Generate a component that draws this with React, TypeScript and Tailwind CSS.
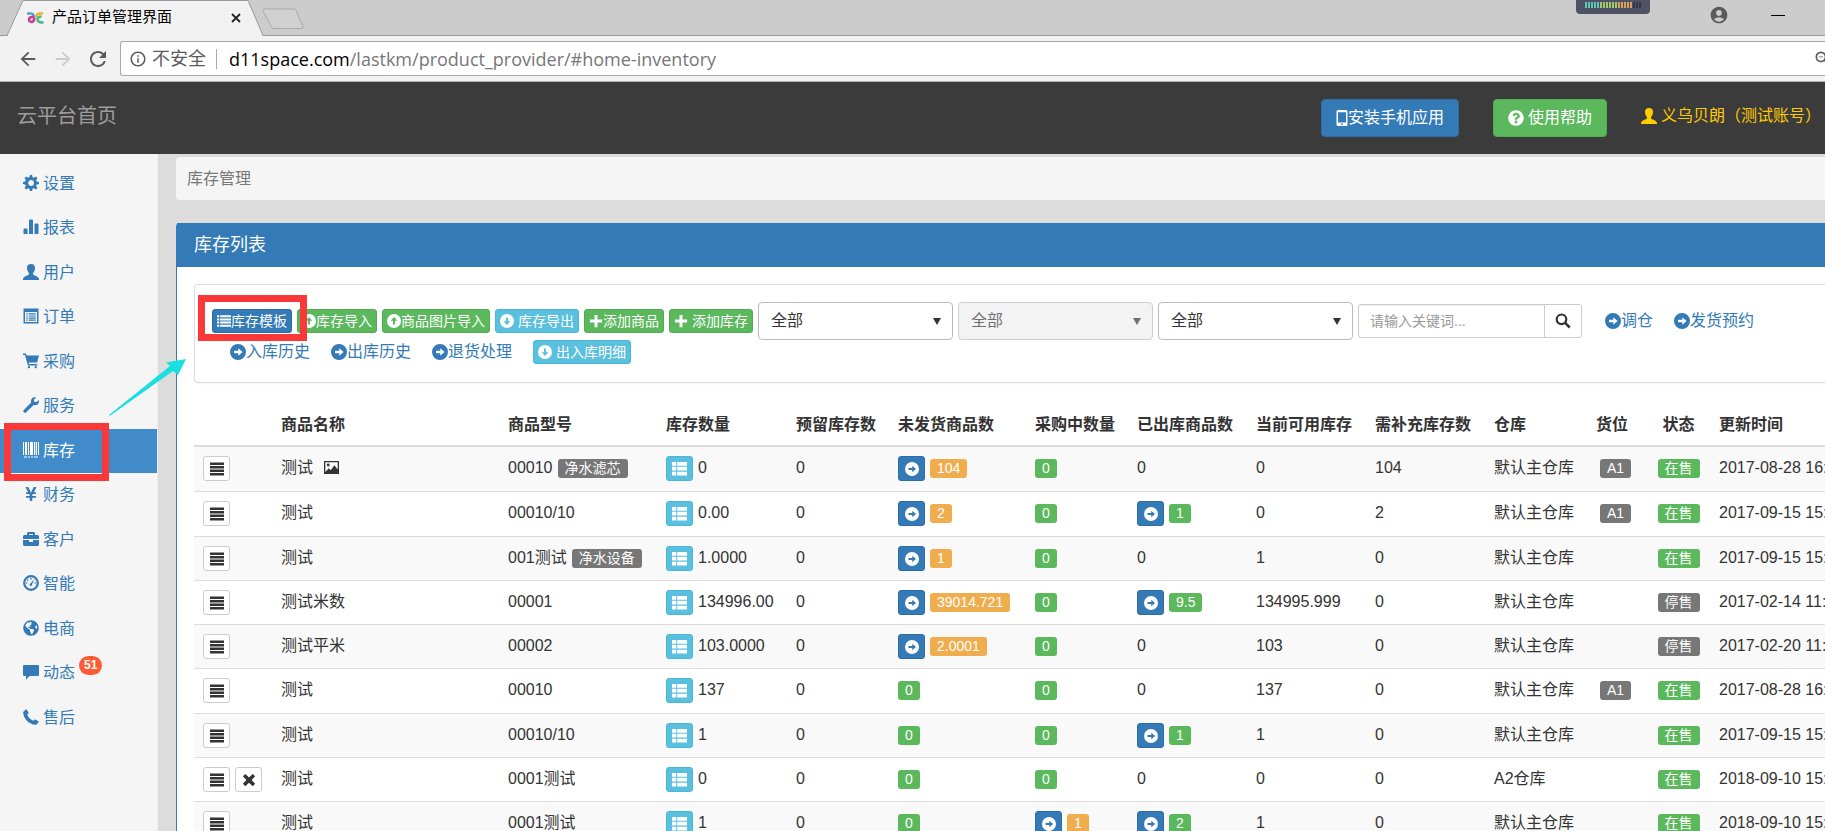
import { useState } from 'react'
import type { ReactNode } from 'react'
import clsx from 'clsx'
import { FaBriefcase, FaGlobeAmericas, FaQuestionCircle, FaYenSign } from 'react-icons/fa'
import {
  MdAccountCircle,
  MdArrowBack,
  MdArrowForward,
  MdInfoOutline,
  MdRefresh,
  MdZoomOut
} from 'react-icons/md'

interface IconProps {
  className?: string
}

function Svg({ className = 'size-4', children }: { className?: string; children: ReactNode }) {
  return (
    <svg viewBox="0 0 16 16" fill="currentColor" aria-hidden="true" className={clsx('shrink-0', className)}>
      {children}
    </svg>
  )
}

function CogIcon({ className }: IconProps) {
  return (
    <Svg className={className}>
      <circle cx="8" cy="8" r="4.4" fill="none" stroke="currentColor" strokeWidth="3" />
      {[0, 45, 90, 135, 180, 225, 270, 315].map((deg) => (
        <path key={deg} d="M6.3 3 6.900 0h2.200l.6 3z" transform={`rotate(${deg} 8 8)`} />
      ))}
    </Svg>
  )
}

function StatsIcon({ className }: IconProps) {
  return (
    <Svg className={className}>
      <path d="M.5 10.5q0-1 1-1h2q1 0 1 1V15h-4zM6 1.5q0-1 1-1h2q1 0 1 1V15H6zM11.5 5.500q0-1 1-1h2q1 0 1 1V15h-4z" />
    </Svg>
  )
}

function UserIcon({ className }: IconProps) {
  return (
    <Svg className={className}>
      <path d="M8 0c2.600 0 4 1.600 4 4 0 2-.8 3.900-1.900 4.900v1.500c.3.9 5.400 1.700 5.900 4.300v1.300H0v-1.300c.5-2.600 5.600-3.400 5.900-4.300V8.900C4.800 7.900 4 6 4 4c0-2.400 1.400-4 4-4z" />
    </Svg>
  )
}

function ListAltIcon({ className }: IconProps) {
  return (
    <Svg className={className}>
      <path fillRule="evenodd" d="M.5.5h15v15H.5zM2 4v10h12V4z" />
      <path d="M3.200 5.300h1.500v1.200H3.200zM5.700 5.300h7v1.200h-7zM3.200 7.400h1.500v1.200H3.200zM5.700 7.400h7v1.200h-7zM3.200 9.500h1.500v1.200H3.200zM5.700 9.500h7v1.200h-7zM3.200 11.600h1.500v1.200H3.200zM5.700 11.600h7v1.200h-7z" />
    </Svg>
  )
}

function CartIcon({ className }: IconProps) {
  return (
    <Svg className={className}>
      <path d="M0 .6h2.900l.7 1.900H16l-1.900 7H5.700l.4 1.600h8.200v1.400H4.900L2 2H0z" />
      <rect x="4.800" y="13" width="2.200" height="2.200" rx=".8" />
      <rect x="11.600" y="13" width="2.200" height="2.200" rx=".8" />
    </Svg>
  )
}

function WrenchIcon({ className }: IconProps) {
  return (
    <Svg className={className}>
      <path d="M13.200.5 10.900 2.800l.4 2 2 .4 2.300-2.300c.9 2.200-.3 4.600-2.500 5.200-.9.200-1.700.1-2.500-.2L3.200 15.300c-.7.700-1.700.7-2.400 0s-.7-1.700 0-2.400L8.200 5.500C7.400 3.200 8.700.9 10.900.3c.8-.2 1.600-.1 2.300.2z" />
    </Svg>
  )
}

function BarcodeIcon({ className }: IconProps) {
  return (
    <Svg className={className}>
      <path d="M0 0h1v13H0zM2 0h2v13H2zM5 0h1v13H5zM7 0h3v13H7zM11 0h1v13h-1zM12.700 0h1.300v13h-1.300zM15 0h1v13h-1zM1 14.400h3v1H1zM5 14.400h2v1H5zM8 14.400h2v1H8zM11 14.400h4v1h-4z" />
    </Svg>
  )
}

function DashboardIcon({ className }: IconProps) {
  return (
    <Svg className={className}>
      <circle cx="8" cy="8" r="6.800" fill="none" stroke="currentColor" strokeWidth="2.200" />
      <circle cx="8" cy="3.900" r=".8" />
      <circle cx="4.800" cy="5.200" r=".8" />
      <circle cx="3.800" cy="8" r=".8" />
      <circle cx="12.200" cy="8" r=".8" />
      <path d="M11.500 4.200 9.100 9.200a1.300 1.300 0 1 1-1.800-.8z" />
    </Svg>
  )
}

function CommentIcon({ className }: IconProps) {
  return (
    <Svg className={className}>
      <path d="M1.200 1h13.600q1.200 0 1.200 1.200v8.600q0 1.200-1.200 1.200H6.500L3 15.500V12H1.200Q0 12 0 10.800V2.200Q0 1 1.200 1z" />
    </Svg>
  )
}

function EarphoneIcon({ className }: IconProps) {
  return (
    <Svg className={className}>
      <path d="M.6 2.400 2.800.5q.6-.4 1 .2l1.700 2.800q.3.600-.2 1L4.200 5.500c.8 2.700 3.600 5.500 6.300 6.300l1-1.100q.4-.5 1-.2l2.800 1.700q.6.400.2 1l-1.900 2.200q-.4.500-1.300.4C6.200 15.300.7 9.800.2 3.700Q.1 2.800.6 2.400z" />
    </Svg>
  )
}

// Solid disc with a cut-out arrow; the rotation turns it into up or down.
function CircleArrowIcon({ className, deg = 0 }: IconProps & { deg?: number }) {
  return (
    <Svg className={className}>
      <path
        fillRule="evenodd"
        transform={`rotate(${deg} 8 8)`}
        d="M8 0a8 8 0 1 1 0 16A8 8 0 0 1 8 0zM8.300 4.200v2.600H4v2.400h4.300v2.600L12.600 8z"
      />
    </Svg>
  )
}

function ListIcon({ className }: IconProps) {
  return (
    <Svg className={className}>
      <path d="M0 1.500h2.600v2.200H0zM3.600 1.500H16v2.200H3.600zM0 5.100h2.600v2.200H0zM3.600 5.100H16v2.200H3.600zM0 8.700h2.600v2.200H0zM3.600 8.700H16v2.200H3.600zM0 12.300h2.600v2.200H0zM3.600 12.300H16v2.200H3.600z" />
    </Svg>
  )
}

function ThListIcon({ className }: IconProps) {
  return (
    <Svg className={className}>
      <path d="M0 1h4.500v4H0zM5.500 1H16v4H5.500zM0 6.200h4.500v4H0zM5.500 6.200H16v4H5.500zM0 11.400h4.500v4H0zM5.500 11.400H16v4H5.500z" />
    </Svg>
  )
}

function JustifyIcon({ className }: IconProps) {
  return (
    <Svg className={className}>
      <path d="M0 .5h16v2.900H0zM0 4.500h16v2.900H0zM0 8.500h16v2.900H0zM0 12.500h16v2.900H0z" />
    </Svg>
  )
}

function RemoveIcon({ className }: IconProps) {
  return (
    <Svg className={className}>
      <path d="m3.800 1 4.200 4 4.200-4L15 3.800 11 8l4 4.200-2.800 2.800L8 11l-4.200 4L1 12.200 5 8 1 3.800z" />
    </Svg>
  )
}

function PlusIcon({ className }: IconProps) {
  return (
    <Svg className={className}>
      <path d="M6.300 1h3.400v5.300H15v3.400H9.700V15H6.300V9.700H1V6.300h5.300z" />
    </Svg>
  )
}

function PictureIcon({ className }: IconProps) {
  return (
    <Svg className={className}>
      <path fillRule="evenodd" d="M0 1h16v14H0zM1.400 2.400v10.400l3.800-4 2 2L11 5.500l3.600 4.500V2.400z" />
      <circle cx="4.500" cy="5.300" r="1.500" />
    </Svg>
  )
}

function SearchIcon({ className }: IconProps) {
  return (
    <Svg className={className}>
      <circle cx="6.500" cy="6.300" r="4.800" fill="none" stroke="currentColor" strokeWidth="2.200" />
      <path d="m9.300 10.700 1.700-1.700 4.600 4.500-1.800 1.900z" />
    </Svg>
  )
}

function MobileIcon() {
  return (
    <svg viewBox="2 0 12 16" fill="currentColor" aria-hidden="true" className="h-4 w-3 shrink-0">
      <path fillRule="evenodd" d="M4 0h8q1.500 0 1.500 1.500v13q0 1.500-1.500 1.500H4q-1.500 0-1.500-1.500v-13Q2.500 0 4 0zM4 2.200v10.300h8V2.200zM7.200 13.500v1.500h1.600v-1.500z" />
    </svg>
  )
}

const navItems = [
  { label: '设置', icon: <CogIcon /> },
  { label: '报表', icon: <StatsIcon /> },
  { label: '用户', icon: <UserIcon /> },
  { label: '订单', icon: <ListAltIcon /> },
  { label: '采购', icon: <CartIcon /> },
  { label: '服务', icon: <WrenchIcon /> },
  { label: '库存', icon: <BarcodeIcon />, active: true },
  { label: '财务', icon: <FaYenSign className="size-4" /> },
  { label: '客户', icon: <FaBriefcase className="size-4" /> },
  { label: '智能', icon: <DashboardIcon /> },
  { label: '电商', icon: <FaGlobeAmericas className="size-4" /> },
  { label: '动态', icon: <CommentIcon />, badge: 51 },
  { label: '售后', icon: <EarphoneIcon /> }
]

interface Row {
  name: string
  picture?: boolean
  removable?: boolean
  model: string
  tag?: string
  stock: string
  unshipped: string
  buying?: string
  shipped?: string
  available: string
  needed: string
  warehouse?: string
  slot?: string
  stopped?: boolean
  updated: string
}

const rows: Row[] = [
  { name: '测试', picture: true, model: '00010', tag: '净水滤芯', stock: '0', unshipped: '104', available: '0', needed: '104', slot: 'A1', updated: '2017-08-28 16:' },
  { name: '测试', model: '00010/10', stock: '0.00', unshipped: '2', shipped: '1', available: '0', needed: '2', slot: 'A1', updated: '2017-09-15 15:' },
  { name: '测试', model: '001测试', tag: '净水设备', stock: '1.0000', unshipped: '1', available: '1', needed: '0', updated: '2017-09-15 15:' },
  { name: '测试米数', model: '00001', stock: '134996.00', unshipped: '39014.721', shipped: '9.5', available: '134995.999', needed: '0', stopped: true, updated: '2017-02-14 11:' },
  { name: '测试平米', model: '00002', stock: '103.0000', unshipped: '2.0001', available: '103', needed: '0', stopped: true, updated: '2017-02-20 11:' },
  { name: '测试', model: '00010', stock: '137', unshipped: '0', available: '137', needed: '0', slot: 'A1', updated: '2017-08-28 16:' },
  { name: '测试', model: '00010/10', stock: '1', unshipped: '0', shipped: '1', available: '1', needed: '0', updated: '2017-09-15 15:' },
  { name: '测试', removable: true, model: '0001测试', stock: '0', unshipped: '0', available: '0', needed: '0', warehouse: 'A2仓库', updated: '2018-09-10 15:' },
  { name: '测试', model: '0001测试', stock: '1', unshipped: '0', buying: '1', shipped: '2', available: '1', needed: '0', updated: '2018-09-10 15:' }
]

const tones = {
  blue: 'border-[#2e6da4] bg-[#337ab7] text-white',
  green: 'border-[#4cae4c] bg-[#5cb85c] text-white',
  cyan: 'border-[#46b8da] bg-[#5bc0de] text-white',
  plain: 'border-[#ccc] bg-white text-[#333]'
}

function SmallButton({ tone, icon, spaced, children }: { tone: keyof typeof tones; icon: ReactNode; spaced?: boolean; children: ReactNode }) {
  return (
    <button type="button" className={clsx('flex h-6 items-center rounded-[3px] border px-1 text-sm whitespace-nowrap', tones[tone], spaced && 'gap-1')}>
      {icon}
      {children}
    </button>
  )
}

function IconButton({ tone, label, children }: { tone: keyof typeof tones; label: string; children: ReactNode }) {
  return (
    <button type="button" aria-label={label} className={clsx('flex h-[25px] w-[27px] items-center justify-center rounded-[3px] border', tones[tone])}>
      {children}
    </button>
  )
}

function Tag({ color, children }: { color: string; children: ReactNode }) {
  return <span className={clsx('mt-[3px] h-[19px] rounded-[3px] px-[7px] text-sm leading-[18px] text-white', color)}>{children}</span>
}

function ArrowLink({ children }: { children: ReactNode }) {
  return (
    <a href="#home-inventory" className="flex items-center leading-6 whitespace-nowrap text-[#337ab7]">
      <CircleArrowIcon />
      {children}
    </a>
  )
}

function FilterSelect({ label, disabled }: { label: string; disabled?: boolean }) {
  return (
    <div className={clsx('relative w-[195px] text-[#333]', disabled && 'opacity-70')}>
      <select
        aria-label={label}
        disabled={disabled}
        className={clsx('h-[38px] w-full appearance-none rounded-[4px] border border-[#bbb] px-3', disabled ? 'bg-[#eee]' : 'bg-white')}
      >
        <option>全部</option>
      </select>
      <svg viewBox="0 0 8 7" className="pointer-events-none absolute top-4 right-3 h-[7px] w-2" fill="currentColor" aria-hidden="true">
        <path d="M0 0h8L4 7z" />
      </svg>
    </div>
  )
}

function QuantityCell({ value, color, linked }: { value: string; color: string; linked?: boolean }) {
  return (
    <Cell>
      {linked && (
        <IconButton tone="blue" label="查看">
          <CircleArrowIcon className="size-[14px]" />
        </IconButton>
      )}
      <Tag color={color}>{value}</Tag>
    </Cell>
  )
}

function Cell({ children, className }: { children?: ReactNode; className?: string }) {
  return (
    <td className="border-t border-[#ddd] px-[9px] pt-[9px] align-top group-first:border-t-0">
      <div className={clsx('flex h-[25px] items-start gap-[5px] leading-[23px] whitespace-nowrap', className)}>{children}</div>
    </td>
  )
}

function BrowserChrome() {
  return (
    <div className="text-[#5a5a5a]">
      <div className="flex h-9 items-stretch border-b border-[#999] bg-[#ccc]">
        <div className="relative ml-[7px] w-64">
          <svg viewBox="0 0 256 36" className="absolute inset-0 h-9 w-64" aria-hidden="true">
            <path d="M0 35.500 16 .5h225L256 35.500" fill="#f2f2f2" stroke="#999" />
            <path d="M1 35.500h254" stroke="#f2f2f2" strokeWidth="1.500" />
          </svg>
          <div className="relative flex h-full items-center pr-[22px] pl-5 text-[15px] text-black">
            <svg viewBox="0 0 17 12" className="mr-2 h-3 w-[17px] shrink-0" fill="none" strokeWidth="2.600" aria-hidden="true">
              <path d="M0 1.500h4q3 0 3 5" stroke="#4aa3df" />
              <path d="M7 5H4.500Q2 5.500 2 7.500T4.500 10Q7 10 7.500 6" stroke="#c7408f" />
              <path d="M16 1.500h-3q-3.500 0-4 4" stroke="#f0b429" />
              <path d="M14.500 4.500q-4 0-4 3t6 3" stroke="#52b788" />
            </svg>
            <span className="flex-1 whitespace-nowrap">产品订单管理界面</span>
            <button type="button" aria-label="关闭" className="text-[#222]">
              <svg viewBox="0 0 10 10" className="size-[10px]" stroke="currentColor" strokeWidth="1.800" aria-hidden="true">
                <path d="m1 1 8 8M9 1 1 9" />
              </svg>
            </button>
          </div>
        </div>
        <button type="button" aria-label="新标签页" className="mt-0.5">
          <svg viewBox="0 0 44 22" className="h-[22px] w-11" aria-hidden="true">
            <path d="M2 1h29q1.500 0 2 1.500l7 16q.5 2-1.500 2H11q-2 0-2.500-1.500L0 3q-.5-2 1-2z" fill="#d1d1d1" stroke="#a9a9a9" />
          </svg>
        </button>
        <div className="flex flex-1 justify-end">
          <svg viewBox="0 0 74 14" className="mr-[59px] h-[14px] w-[74px]" aria-hidden="true">
            <path d="M0 0h74v10q0 4-4 4H4q-4 0-4-4z" fill="#4e5264" />
            <path d="M9 5h56" stroke="#353846" strokeWidth="6" strokeDasharray="2 1" />
            <path d="M9 5h15" stroke="#5cc8b0" strokeWidth="6" strokeDasharray="2 1" />
            <path d="M24 5h18" stroke="#a3c86a" strokeWidth="6" strokeDasharray="2 1" />
            <path d="M42 5h14" stroke="#d9a25b" strokeWidth="6" strokeDasharray="2 1" />
          </svg>
          <MdAccountCircle className="mt-[5px] mr-[42px] size-5" />
          <span className="mt-[15px] mr-10 h-px w-[14px] bg-black" />
        </div>
      </div>
      <div className="flex h-[46px] items-center border-b border-[#b5b5b5] bg-[#f2f2f2] pl-[17px]">
        <button type="button" aria-label="后退">
          <MdArrowBack className="size-[22px]" />
        </button>
        <button type="button" aria-label="前进" className="ml-[13px] text-[#ccc]">
          <MdArrowForward className="size-[22px]" />
        </button>
        <button type="button" aria-label="刷新" className="mr-2.5 ml-3">
          <MdRefresh className="size-6" />
        </button>
        <div className="flex h-[35px] flex-1 items-center rounded-l-[3px] border border-r-0 border-[#a9a9a9] bg-white pl-2 text-lg">
          <MdInfoOutline className="size-[18px]" />
          <span className="ml-[5px]">不安全</span>
          <span className="mr-3 ml-2.5 h-5 w-px bg-[#aaa]" />
          <span className="flex-1 font-['Open_Sans','Noto_Sans_CJK_SC',sans-serif] text-[#777]">
            <span className="text-black">d11space.com</span>/lastkm/product_provider/#home-inventory
          </span>
          <MdZoomOut className="-mr-2 size-5" />
        </div>
      </div>
    </div>
  )
}

function Sidebar() {
  return (
    <aside className="relative w-[158px] shrink-0 border-r border-[#eee] bg-[#f5f5f5] pt-2">
      <nav>
        {navItems.map((item) => (
          <a
            key={item.label}
            href="#home-inventory"
            className={clsx(
              'relative flex h-11 items-center gap-1 pl-[22px] even:mb-px',
              item.active ? 'bg-[#428bca] text-white' : 'text-[#337ab7]'
            )}
          >
            <span className="flex w-[17px] justify-center pb-0.5">{item.icon}</span>
            {item.label}
            {item.badge && (
              <span className="mb-4 rounded-full bg-[#ff5b33] px-[5px] text-xs leading-[19px] font-bold text-white">{item.badge}</span>
            )}
            {item.active && <span className="absolute -top-1.5 left-1 z-10 h-[58px] w-[105px] border-[7px] border-[#fb3838]" />}
          </a>
        ))}
      </nav>
      <svg viewBox="0 0 78 58" className="absolute top-[204px] left-[109px] z-10 h-[58px] w-[78px]" fill="#1adfdf" aria-hidden="true">
        <path d="M77 1 57 4.500l4 3.500L0 57l1 .7L64 13l5 4z" />
      </svg>
    </aside>
  )
}

function FilterBox() {
  const [keyword, setKeyword] = useState('')

  return (
    <div className="rounded-l-[4px] border border-r-0 border-[#ddd] py-[17px] pl-[17px] shadow-xs">
      <div className="flex items-center gap-[5px]">
        <div className="relative">
          <SmallButton tone="blue" icon={<ListIcon className="size-[14px]" />}>库存模板</SmallButton>
          <span className="pointer-events-none absolute -top-3.5 -left-3.5 z-10 h-[46px] w-[109px] border-[7px] border-[#fb3838]" />
        </div>
        <SmallButton tone="green" icon={<CircleArrowIcon deg={-90} className="size-[14px]" />}>库存导入</SmallButton>
        <SmallButton tone="green" icon={<CircleArrowIcon deg={-90} className="size-[14px]" />}>商品图片导入</SmallButton>
        <SmallButton tone="cyan" spaced icon={<CircleArrowIcon deg={90} className="size-[14px]" />}>库存导出</SmallButton>
        <SmallButton tone="green" icon={<PlusIcon className="size-[14px]" />}>添加商品</SmallButton>
        <SmallButton tone="green" spaced icon={<PlusIcon className="size-[14px]" />}>添加库存</SmallButton>
        <FilterSelect label="仓库" />
        <FilterSelect label="货位" disabled />
        <FilterSelect label="状态" />
        <form className="flex h-[34px] w-56" onSubmit={(e) => e.preventDefault()}>
          <input
            type="text"
            aria-label="关键词"
            placeholder="请输入关键词..."
            value={keyword}
            onChange={(e) => setKeyword(e.target.value)}
            className="min-w-0 flex-1 rounded-l-[3px] border border-[#ccc] px-[11px] text-sm inset-shadow-2xs placeholder:text-[#999]"
          />
          <button type="submit" aria-label="搜索" className="-ml-px flex w-[38px] items-center justify-center rounded-r-[3px] border border-[#ccc] text-[#333]">
            <SearchIcon />
          </button>
        </form>
        <div className="flex gap-[21px] pl-[18px]">
          <ArrowLink>调仓</ArrowLink>
          <ArrowLink>发货预约</ArrowLink>
        </div>
      </div>
      <div className="flex h-[25px] items-start gap-[21px] pl-[18px]">
        <ArrowLink>入库历史</ArrowLink>
        <ArrowLink>出库历史</ArrowLink>
        <ArrowLink>退货处理</ArrowLink>
        <SmallButton tone="cyan" spaced icon={<CircleArrowIcon deg={90} className="size-[14px]" />}>出入库明细</SmallButton>
      </div>
    </div>
  )
}

function InventoryTable() {
  return (
    <table className="mt-[21px] w-full table-fixed border-separate border-spacing-0">
      <colgroup>
        <col className="w-[78px]" />
        <col className="w-[227px]" />
        <col className="w-[158px]" />
        <col className="w-[130px]" />
        <col className="w-[102px]" />
        <col className="w-[137px]" />
        <col className="w-[102px]" />
        <col className="w-[119px]" />
        <col className="w-[119px]" />
        <col className="w-[119px]" />
        <col className="w-[102px]" />
        <col className="w-[60px]" />
        <col className="w-[63px]" />
        <col />
      </colgroup>
      <thead>
        <tr>
          {['', '商品名称', '商品型号', '库存数量', '预留库存数', '未发货商品数', '采购中数量', '已出库商品数', '当前可用库存', '需补充库存数', '仓库', '货位', '状态', '更新时间'].map((title) => (
            <th
              key={title}
              className={clsx(
                'border-b-2 border-[#ddd] px-[9px] py-[9px] leading-[23px] whitespace-nowrap',
                title === '状态' ? 'text-center' : 'text-left'
              )}
            >
              {title}
            </th>
          ))}
        </tr>
      </thead>
      <tbody>
        {rows.map((row, i) => (
          <tr key={i} className="group h-11 odd:bg-[#f9f9f9] nth-[4n+2]:h-[45px]">
            <Cell>
              <IconButton tone="plain" label="明细">
                <JustifyIcon className="size-[14px]" />
              </IconButton>
              {row.removable && (
                <IconButton tone="plain" label="删除">
                  <RemoveIcon className="size-[14px]" />
                </IconButton>
              )}
            </Cell>
            <Cell>
              {row.name}
              {row.picture && <PictureIcon className="mt-1 ml-1.5 size-[15px]" />}
            </Cell>
            <Cell>
              {row.model}
              {row.tag && <Tag color="bg-[#777]">{row.tag}</Tag>}
            </Cell>
            <Cell>
              <IconButton tone="cyan" label="库存明细">
                <ThListIcon className="size-[15px]" />
              </IconButton>
              {row.stock}
            </Cell>
            <Cell>0</Cell>
            <QuantityCell
              value={row.unshipped}
              linked={row.unshipped !== '0'}
              color={row.unshipped === '0' ? 'bg-[#5cb85c]' : 'bg-[#f0ad4e]'}
            />
            <QuantityCell value={row.buying ?? '0'} linked={!!row.buying} color={row.buying ? 'bg-[#f0ad4e]' : 'bg-[#5cb85c]'} />
            {row.shipped ? <QuantityCell value={row.shipped} linked color="bg-[#5cb85c]" /> : <Cell>0</Cell>}
            <Cell>{row.available}</Cell>
            <Cell>{row.needed}</Cell>
            <Cell>{row.warehouse ?? '默认主仓库'}</Cell>
            <Cell className="pl-1">{row.slot && <Tag color="bg-[#777]">{row.slot}</Tag>}</Cell>
            <Cell className="justify-center">
              <Tag color={row.stopped ? 'bg-[#777]' : 'bg-[#5cb85c]'}>{row.stopped ? '停售' : '在售'}</Tag>
            </Cell>
            <Cell>{row.updated}</Cell>
          </tr>
        ))}
      </tbody>
    </table>
  )
}

export default function App() {
  return (
    <div className="flex h-screen flex-col overflow-hidden bg-[#dcdcdc] font-['Liberation_Sans','Noto_Sans_CJK_SC',sans-serif] text-base text-[#333]">
      <BrowserChrome />
      <header className="flex h-[72px] shrink-0 items-center justify-between bg-[#3b3b3b] pr-1 pl-[17px]">
        <a href="#home" className="pb-1 text-xl text-[#9d9d9d]">云平台首页</a>
        <div className="flex items-center">
          <button type="button" className="flex h-[38px] items-center rounded-[4px] border border-[#2e6da4] bg-[#337ab7] px-3.5 text-white">
            <MobileIcon />
            安装手机应用
          </button>
          <button type="button" className="ml-[34px] flex h-[38px] items-center gap-1 rounded-[4px] border border-[#4cae4c] bg-[#5cb85c] px-3.5 text-white">
            <FaQuestionCircle className="size-4" />
            使用帮助
          </button>
          <a href="#account" className="ml-[34px] flex items-center gap-1 pb-1 text-[#fc0]">
            <UserIcon />
            义乌贝朗（测试账号）
          </a>
        </div>
      </header>
      <div className="flex min-h-0 flex-1">
        <Sidebar />
        <main className="min-w-0 flex-1 pt-[3px] pl-[18px]">
          <div className="rounded-l-[4px] bg-[#f5f5f5] px-[11px] py-2.5 leading-[23px] text-[#777]">库存管理</div>
          <section className="mt-[23px] rounded-tl-[4px] border border-r-0 border-[#337ab7] bg-white">
            <h1 className="-mt-px bg-[#337ab7] px-[17px] py-2.5 text-lg leading-6 text-white">库存列表</h1>
            <div className="pt-[17px] pl-[17px]">
              <FilterBox />
              <InventoryTable />
            </div>
          </section>
        </main>
      </div>
    </div>
  )
}
